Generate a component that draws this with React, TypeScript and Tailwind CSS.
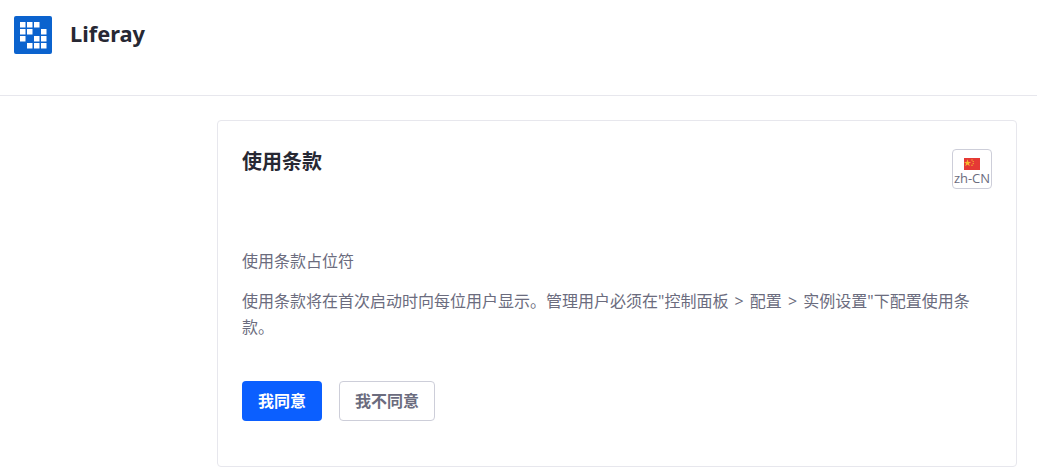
const cells = [
  [0, 0], [1, 0], [2, 0],
  [0, 1], [1, 1], [3, 1],
  [0, 2], [2, 2], [3, 2],
  [1, 3], [2, 3], [3, 3],
];

function Logo() {
  return (
    <svg width="38" height="38" viewBox="0 0 38 38" className="shrink-0">
      <rect width="38" height="38" rx="2" fill="#0b63ce" />
      {cells.map(([x, y]) => (
        <rect key={`${x}-${y}`} x={6 + x * 7} y={6 + y * 7} width="5.5" height="5.5" fill="#ffffff" />
      ))}
    </svg>
  );
}

function FlagCN() {
  return (
    <svg width="16" height="12" viewBox="0 0 16 12" className="block shrink-0">
      <rect width="16" height="12" fill="#e53935" />
      <polygon points="3.5,1.2 4.4,3.9 7.2,3.9 4.9,5.5 5.8,8.2 3.5,6.5 1.2,8.2 2.1,5.5 -0.2,3.9 2.6,3.9" fill="#f5b82e" />
      <circle cx="8" cy="2" r="0.7" fill="#f5b82e" />
      <circle cx="9.2" cy="3.6" r="0.7" fill="#f5b82e" />
      <circle cx="9.2" cy="5.6" r="0.7" fill="#f5b82e" />
      <circle cx="8" cy="7.2" r="0.7" fill="#f5b82e" />
    </svg>
  );
}

export default function App() {
  return (
    <div className="h-[476px] overflow-hidden bg-white font-['Open_Sans','Noto_Sans_CJK_SC',sans-serif] text-[#6b6c7e]">
      <header className="h-24 border-b border-[#e7e7ed] px-3.5 pt-4">
        <div className="flex items-center gap-[18px]">
          <Logo />
          <span className="-mt-0.5 font-['Noto_Sans',sans-serif] text-[21.8px] font-bold text-[#272833]">Liferay</span>
        </div>
      </header>

      <main className="pl-[217px] pr-5 pt-6">
        <div className="h-[347px] rounded border border-[#e7e7ed] px-6 pt-[27px]">
          <div className="flex items-start justify-between">
            <h1 className="text-xl font-semibold leading-[28px] text-[#272833]">使用条款</h1>
            <button className="mt-[1px] flex h-10 w-10 flex-col items-center rounded border border-[#cdced9] pt-2 text-[13px] leading-4">
              <FlagCN />
              zh-CN
            </button>
          </div>

          <p className="mt-[60px] text-base leading-6">使用条款占位符</p>
          <p className="mt-[15px] text-base leading-[26px] [word-spacing:2px]">
            使用条款将在首次启动时向每位用户显示。管理用户必须在"控制面板 &gt; 配置 &gt; 实例设置"下配置使用条款。
          </p>

          <div className="mt-[41px] flex gap-[17px]">
            <button className="h-10 w-20 rounded bg-[#0b5fff] text-base font-semibold text-white">我同意</button>
            <button className="h-10 w-24 rounded border border-[#cdced9] bg-white text-base font-semibold">我不同意</button>
          </div>
        </div>
      </main>
    </div>
  );
}
